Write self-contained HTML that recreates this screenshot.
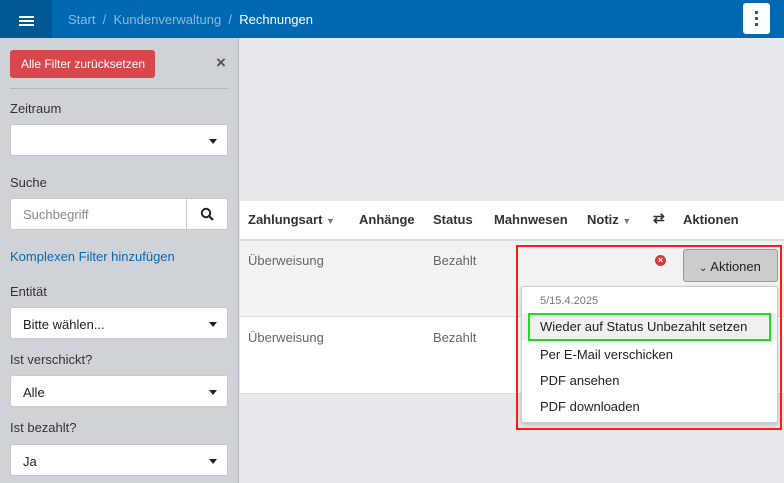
<html><head><style>
*{box-sizing:border-box;margin:0;padding:0}
body{width:784px;height:483px;overflow:hidden;font-family:"Liberation Sans",sans-serif;background:#e8e9ed;position:relative;font-size:13px;color:#333}
.a{position:absolute;white-space:nowrap}
.sel{position:absolute;left:10px;width:218px;height:32px;background:#fff;border:1px solid #c8cacd;border-radius:3px;padding:9px 12px;font-size:13px;color:#222}
.sel:after{content:"";position:absolute;right:10px;top:14px;border:4px solid transparent;border-top:5px solid #222}
.lbl{position:absolute;left:10px;font-size:13px;color:#333}
</style></head><body>
<div class="a" style="left:0;top:0;width:784px;height:38px;background:#0069b1"></div>
<div class="a" style="left:0;top:0;width:52px;height:38px;background:#005895"></div>
<div class="a" style="left:19px;top:17px;width:15px;height:2px;background:#fff;box-shadow:0 4px 0 #fff,0 8px 0 #fff;margin-top:-1px"></div>
<div class="a" style="left:68px;top:12px;font-size:13px;color:#8fb8da">Start &nbsp;/&nbsp; Kundenverwaltung &nbsp;/&nbsp; <span style="color:#fff">Rechnungen</span></div>
<div class="a" style="left:743px;top:3px;width:27px;height:31px;background:#fff;border-radius:3px"></div>
<div class="a" style="left:755px;top:11px;width:3px;height:3px;background:#0069b1;box-shadow:0 6px 0 #0069b1,0 12px 0 #0069b1"></div>
<div class="a" style="left:0;top:38px;width:239px;height:445px;background:#cfd2d6;border-right:1px solid #b8bbbf"></div>
<div class="a" style="left:10px;top:50px;width:145px;height:28px;background:#d8474b;border-radius:3px;color:#fff;font-size:12px;padding:7px 0 0 11px">Alle Filter zurücksetzen</div>
<div class="a" style="left:216px;top:53px;font-size:17px;font-weight:bold;color:#555">×</div>
<div class="a" style="left:10px;top:88px;width:219px;height:1px;background:#b5b8bc"></div>
<div class="lbl" style="top:101px">Zeitraum</div>
<div class="sel" style="top:124px"></div>
<div class="lbl" style="top:175px">Suche</div>
<div class="a" style="left:10px;top:198px;width:218px;height:32px;background:#fff;border:1px solid #c8cacd;border-radius:3px;padding:8px 12px;color:#888">Suchbegriff</div>
<div class="a" style="left:186px;top:198px;width:1px;height:32px;background:#c8cacd"></div>
<svg class="a" style="left:200px;top:207px" width="14" height="14"><circle cx="6" cy="6" r="4.2" stroke="#222" stroke-width="2" fill="none"/><line x1="9" y1="9" x2="13" y2="13" stroke="#222" stroke-width="2.2"/></svg>
<div class="a" style="left:10px;top:249px;color:#0a68ad">Komplexen Filter hinzufügen</div>
<div class="lbl" style="top:284px">Entität</div>
<div class="sel" style="top:307px">Bitte wählen...</div>
<div class="lbl" style="top:352px">Ist verschickt?</div>
<div class="sel" style="top:375px">Alle</div>
<div class="lbl" style="top:420px">Ist bezahlt?</div>
<div class="sel" style="top:444px">Ja</div>
<div class="a" style="left:240px;top:201px;width:544px;height:193px;background:#fff"></div>
<div class="a" style="left:240px;top:239px;width:544px;height:2px;background:#dcdcdc"></div>
<div class="a" style="left:240px;top:241px;width:544px;height:76px;background:#f2f2f2;border-bottom:1px solid #dcdcdc"></div>
<div class="a" style="left:240px;top:393px;width:544px;height:1px;background:#dcdcdc"></div>
<div class="a" style="top:212px;left:248px;font-weight:bold;color:#333">Zahlungsart <span style="color:#777;font-size:9px">▼</span></div>
<div class="a" style="top:212px;left:359px;font-weight:bold;color:#333">Anhänge</div>
<div class="a" style="top:212px;left:433px;font-weight:bold;color:#333">Status</div>
<div class="a" style="top:212px;left:494px;font-weight:bold;color:#333">Mahnwesen</div>
<div class="a" style="top:212px;left:587px;font-weight:bold;color:#333">Notiz <span style="color:#777;font-size:9px">▼</span></div>
<div class="a" style="top:210px;left:653px;font-weight:bold;color:#333;font-size:14px">⇄</div>
<div class="a" style="top:212px;left:683px;font-weight:bold;color:#333">Aktionen</div>
<div class="a" style="top:253px;left:248px;color:#666">Überweisung</div>
<div class="a" style="top:253px;left:433px;color:#666">Bezahlt</div>
<div class="a" style="top:330px;left:248px;color:#666">Überweisung</div>
<div class="a" style="top:330px;left:433px;color:#666">Bezahlt</div>
<div class="a" style="left:655px;top:255px;width:11px;height:11px;border-radius:50%;background:#d9363e;color:#fff;font-size:9px;line-height:11px;text-align:center;font-weight:bold">×</div>
<div class="a" style="left:683px;top:249px;width:95px;height:33px;background:#cccccc;border:1px solid #999;border-radius:3px;padding:9px 0 0 15px;color:#222"><span style="font-size:10px">⌄</span> Aktionen</div>
<div class="a" style="left:521px;top:286px;width:257px;height:137px;background:#fff;border:1px solid #ccc;border-radius:3px;box-shadow:0 2px 5px rgba(0,0,0,.2)"></div>
<div class="a" style="left:540px;top:295px;font-size:11px;color:#777">5/15.4.2025</div>
<div class="a" style="left:522px;top:313px;width:255px;height:27px;background:#f0f0f0"></div>
<div class="a" style="left:528px;top:313px;width:243px;height:28px;border:2px solid #19e019"></div>
<div class="a" style="left:540px;top:319px;color:#222">Wieder auf Status Unbezahlt setzen</div>
<div class="a" style="left:540px;top:347px;color:#222">Per E-Mail verschicken</div>
<div class="a" style="left:540px;top:373px;color:#222">PDF ansehen</div>
<div class="a" style="left:540px;top:399px;color:#222">PDF downloaden</div>
<div class="a" style="left:516px;top:245px;width:266px;height:185px;border:2px solid #ff1a1a"></div>
</body></html>
